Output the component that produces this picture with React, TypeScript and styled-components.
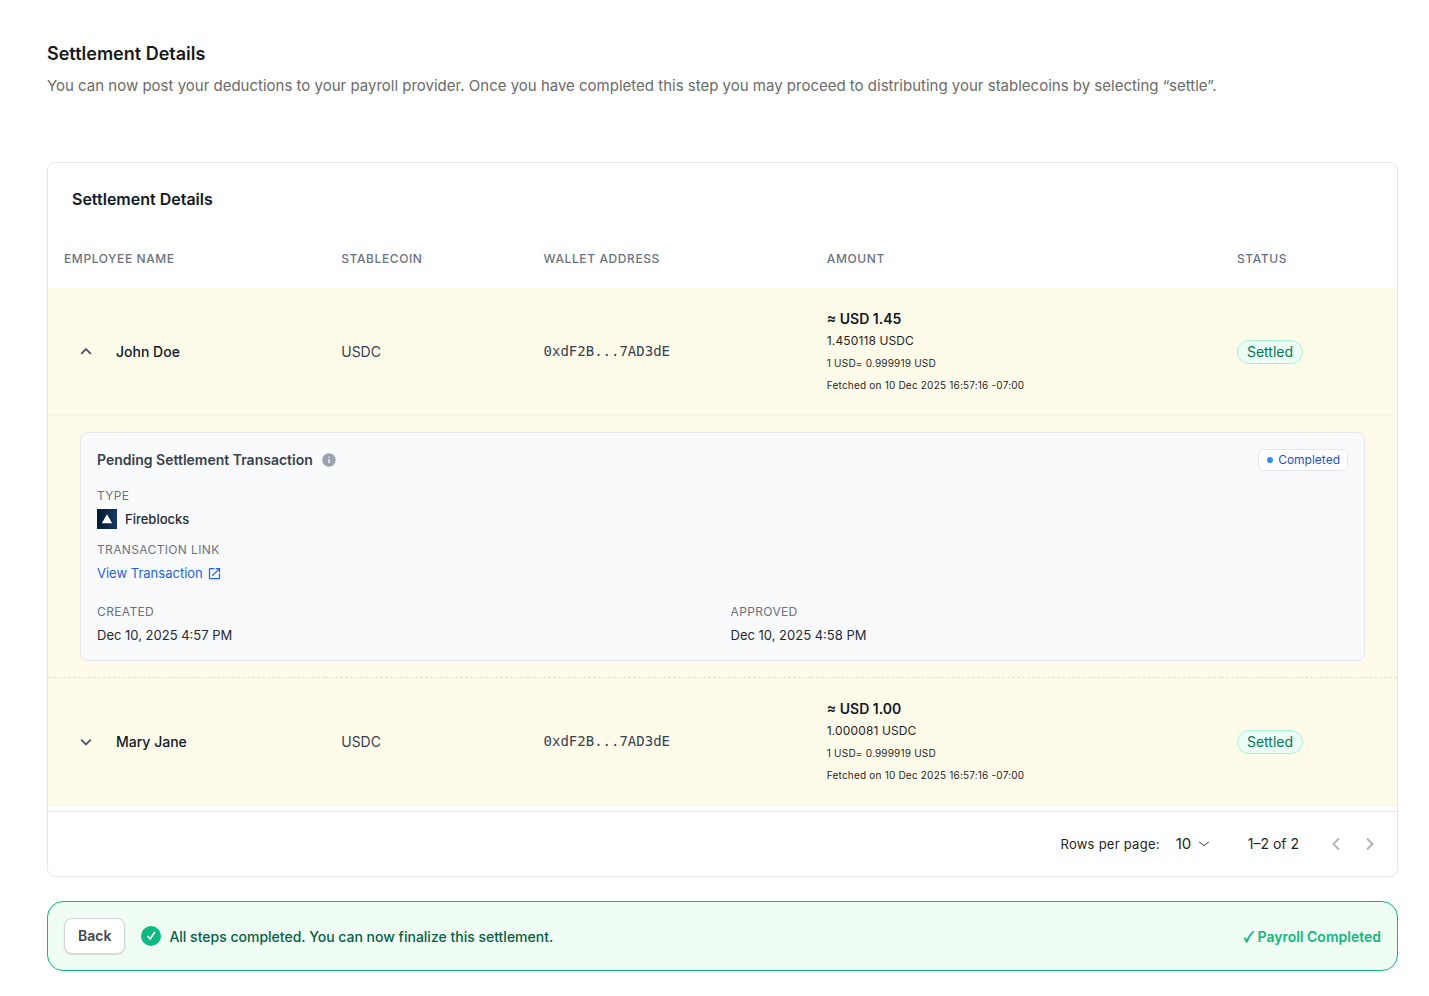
import React, { useState } from "react";
import styled, { createGlobalStyle } from "styled-components";

const GlobalStyle = createGlobalStyle`
  *, *::before, *::after { box-sizing: border-box; }
  body {
    margin: 0;
    background: #ffffff;
    color: #1f1f1f;
    font-family: Inter, "Liberation Sans", sans-serif;
    font-size: 14px;
    line-height: 20px;
  }
  h1, h2, h3, p, dl, dd, dt { margin: 0; }
  button, select { font-family: inherit; }
`;

const Page = styled.main`
  padding: 40px 31px 25px 47px;
`;

const PageTitle = styled.h1`
  font-size: 18px;
  line-height: 28px;
  font-weight: 600;
  color: #1a1a1a;
`;

const PageIntro = styled.p`
  margin-top: 6px;
  font-size: 15px;
  line-height: 24px;
  color: #6b6b6b;
`;

const Card = styled.section`
  margin-top: 64px;
  border: 1px solid #e5e7eb;
  border-radius: 8px;
  overflow: hidden;
`;

const CardTitle = styled.h2`
  padding: 24px 24px 16px;
  font-size: 16px;
  line-height: 24px;
  font-weight: 600;
  color: #111827;
`;

const Table = styled.table`
  width: 100%;
  table-layout: fixed;
  border-collapse: separate;
  border-spacing: 0;
  text-align: left;
`;

const HeadCell = styled.th<{ $width: string }>`
  width: ${(p) => p.$width};
  height: 61px;
  padding: 2px 16px 0;
  font-size: 12px;
  line-height: 18px;
  font-weight: 500;
  letter-spacing: 0.05em;
  text-transform: uppercase;
  color: #6b7280;
`;

const Row = styled.tr<{ $divided?: boolean }>`
  background: #fffbeb;
  > td {
    padding: 20px 16px 19px;
    border-top: ${(p) => (p.$divided ? "1px dashed #e0e0e0" : "0")};
    border-bottom: 1px solid #f3f4f6;
    color: #374151;
  }
`;

const NameGroup = styled.div`
  display: flex;
  align-items: center;
  gap: 20px;
  padding-left: 12px;
  font-weight: 500;
  color: #111827;
`;

const ExpandButton = styled.button`
  display: flex;
  padding: 4px;
  border: 0;
  background: none;
  color: #4b5563;
  cursor: pointer;
`;

const Wallet = styled.span`
  display: block;
  padding-bottom: 2px;
  font-family: "DejaVu Sans Mono", monospace;
  color: #374151;
`;

const Amount = styled.div`
  display: flex;
  flex-direction: column;
  line-height: 22px;
`;

const AmountUsd = styled.strong`
  font-weight: 600;
  color: #111827;
`;

const AmountCoin = styled.span`
  font-size: 12px;
  letter-spacing: 0.01em;
  color: #1f1f1f;
`;

const AmountNote = styled.span`
  font-size: 10px;
  letter-spacing: 0.02em;
  color: #1f1f1f;
`;

const StatusPill = styled.span`
  display: inline-block;
  padding: 1px 9px;
  border: 1px solid #a7f3d0;
  border-radius: 12px;
  background: #ecfdf5;
  line-height: 20px;
  color: #047857;
`;

const DetailCell = styled.td`
  padding: 16px 32px;
  background: #fffbeb;
`;

const Panel = styled.div`
  padding: 16px 16px 15px;
  border: 1px solid #e5e7eb;
  border-radius: 8px;
  background: #f9fafb;
`;

const PanelHeader = styled.div`
  display: flex;
  align-items: center;
  justify-content: space-between;
  height: 22px;
  margin-bottom: 16px;
`;

const PanelTitle = styled.h3`
  display: flex;
  align-items: center;
  gap: 8px;
  font-size: 14px;
  font-weight: 600;
  color: #374151;
`;

const StateChip = styled.span`
  display: flex;
  align-items: center;
  gap: 5px;
  padding: 0 7px 0 8px;
  border: 1px solid #e5e7eb;
  border-radius: 6px;
  background: #ffffff;
  font-size: 12px;
  line-height: 20px;
  color: #1d4ed8;
  &::before {
    content: "";
    width: 6px;
    height: 6px;
    border-radius: 50%;
    background: #2e90fa;
  }
`;

const Fields = styled.dl`
  display: grid;
  grid-template-columns: 1fr 1fr;
  column-gap: 16px;
`;

const Field = styled.div<{ $wide?: boolean; $gap?: number }>`
  grid-column: ${(p) => (p.$wide ? "1 / -1" : "auto")};
  margin-top: ${(p) => p.$gap ?? 0}px;
`;

const FieldLabel = styled.dt`
  margin-bottom: 4px;
  font-size: 12px;
  line-height: 18px;
  letter-spacing: 0.03em;
  text-transform: uppercase;
  color: #6b7280;
`;

const FieldValue = styled.dd<{ $strong?: boolean }>`
  display: flex;
  align-items: center;
  gap: 8px;
  font-size: 13px;
  font-weight: ${(p) => (p.$strong ? 500 : 400)};
  color: #1f2937;
`;

const TransactionLink = styled.a`
  display: flex;
  align-items: center;
  gap: 4px;
  color: #2563eb;
  text-decoration: none;
`;

const Pagination = styled.footer`
  display: flex;
  align-items: center;
  justify-content: flex-end;
  height: 65px;
  margin-top: 5px;
  padding-right: 17px;
  border-top: 1px solid #e5e7eb;
`;

const RowsLabel = styled.label`
  font-size: 13px;
  letter-spacing: 0.02em;
`;

const SelectWrap = styled.span`
  display: grid;
  align-items: center;
  margin: 0 38px 0 16px;
  color: #6b7280;
  > * { grid-area: 1 / 1; }
  > svg { justify-self: end; pointer-events: none; }
`;

const RowsSelect = styled.select`
  appearance: none;
  width: 34px;
  padding: 0;
  border: 0;
  background: none;
  font-size: 15px;
  line-height: 24px;
  color: #1f1f1f;
`;

const PageButtons = styled.span`
  display: flex;
  gap: 14px;
  margin-left: 27px;
`;

const PageButton = styled.button`
  display: flex;
  padding: 0;
  border: 0;
  background: none;
  color: #b5b5b5;
`;

const Banner = styled.section`
  display: flex;
  align-items: center;
  margin-top: 24px;
  padding: 16px;
  border: 1px solid #10b981;
  border-radius: 16px;
  background: #effdf4;
  font-weight: 500;
`;

const BackButton = styled.button`
  height: 36px;
  padding: 0 13px 2px;
  border: 1px solid #d1d5db;
  border-radius: 8px;
  background: #ffffff;
  box-shadow: 0 1px 2px rgba(0, 0, 0, 0.12);
  font-size: 14px;
  font-weight: 600;
  color: #414651;
`;

const BannerText = styled.p`
  display: flex;
  align-items: center;
  gap: 8px;
  margin-left: 16px;
  color: #065f46;
  > span { padding-top: 2px; }
`;

const BannerResult = styled.strong`
  display: flex;
  align-items: center;
  gap: 2px;
  margin-left: auto;
  padding-top: 2px;
  font-weight: 600;
  color: #10b981;
`;

const Chevron = ({ d, size = 20, stroke = 2 }: { d: string; size?: number; stroke?: number }) => (
  <svg width={size} height={size} viewBox="0 0 20 20" fill="none" stroke="currentColor" strokeWidth={stroke} aria-hidden="true">
    <path d={d} />
  </svg>
);

const InfoIcon = () => (
  <svg width="16" height="16" viewBox="0 0 24 24" fill="#9ca3af" aria-hidden="true">
    <path d="M12 2C6.48 2 2 6.48 2 12s4.48 10 10 10 10-4.48 10-10S17.52 2 12 2zm1 15h-2v-6h2v6zm0-8h-2V7h2v2z" />
  </svg>
);

const LaunchIcon = () => (
  <svg width="15" height="15" viewBox="0 0 24 24" fill="currentColor" aria-hidden="true">
    <path d="M19 19H5V5h7V3H5a2 2 0 0 0-2 2v14a2 2 0 0 0 2 2h14c1.1 0 2-.9 2-2v-7h-2v7zM14 3v2h3.59l-9.83 9.83 1.41 1.41L19 6.41V10h2V3h-7z" />
  </svg>
);

const FireblocksLogo = () => (
  <svg width="20" height="20" viewBox="0 0 20 20" aria-hidden="true">
    <defs>
      <linearGradient id="fireblocks-bg" x1="0" x2="1">
        <stop offset="0" stopColor="#021a2b" />
        <stop offset="1" stopColor="#16376a" />
      </linearGradient>
    </defs>
    <rect width="20" height="20" fill="url(#fireblocks-bg)" />
    <path d="M10 5.2 15.2 14.2H4.8Z" fill="#ffffff" />
  </svg>
);

const DoneIcon = () => (
  <svg width="20" height="20" viewBox="0 0 20 20" aria-hidden="true">
    <circle cx="10" cy="10" r="10" fill="#10b981" />
    <path d="M5.8 10.6 7.2 9.5 9 11.7 13.3 5.6 14.6 6.2 9.3 14.2Z" fill="#ffffff" />
  </svg>
);

const CheckMark = () => (
  <svg width="12" height="12" viewBox="0 0 12 12" fill="currentColor" aria-hidden="true">
    <path d="M0.6 7.6 2.4 6.2C3.1 6.6 3.5 7.4 3.8 8.5 5.3 5.2 7.4 2.3 9.6 0.3H11.6C8.6 3.3 6.2 7 4.5 11.4H2.8C2.3 9.7 1.7 8.4 0.6 7.6Z" />
  </svg>
);

const columns = [
  { label: "Employee name", width: "20.55%" },
  { label: "Stablecoin", width: "15%" },
  { label: "Wallet address", width: "21%" },
  { label: "Amount", width: "30.4%" },
  { label: "Status", width: "13.05%" },
];

const employees = [
  { name: "John Doe", usd: "1.45", coin: "1.450118" },
  { name: "Mary Jane", usd: "1.00", coin: "1.000081" },
];

const TransactionPanel = () => (
  <Panel>
    <PanelHeader>
      <PanelTitle>
        Pending Settlement Transaction
        <InfoIcon />
      </PanelTitle>
      <StateChip>Completed</StateChip>
    </PanelHeader>
    <Fields>
      <Field $wide>
        <FieldLabel>Type</FieldLabel>
        <FieldValue $strong>
          <FireblocksLogo />
          Fireblocks
        </FieldValue>
      </Field>
      <Field $wide $gap={12}>
        <FieldLabel>Transaction link</FieldLabel>
        <FieldValue>
          <TransactionLink href="#transaction">
            View Transaction
            <LaunchIcon />
          </TransactionLink>
        </FieldValue>
      </Field>
      <Field $gap={20}>
        <FieldLabel>Created</FieldLabel>
        <FieldValue>Dec 10, 2025 4:57 PM</FieldValue>
      </Field>
      <Field $gap={20}>
        <FieldLabel>Approved</FieldLabel>
        <FieldValue>Dec 10, 2025 4:58 PM</FieldValue>
      </Field>
    </Fields>
  </Panel>
);

export default function App() {
  const [open, setOpen] = useState<string | null>("John Doe");

  return (
    <>
      <GlobalStyle />
      <Page>
        <PageTitle>Settlement Details</PageTitle>
        <PageIntro>
          You can now post your deductions to your payroll provider. Once you have completed this step you may proceed to
          distributing your stablecoins by selecting “settle”.
        </PageIntro>

        <Card>
          <CardTitle>Settlement Details</CardTitle>
          <Table>
            <thead>
              <tr>
                {columns.map((c) => (
                  <HeadCell key={c.label} $width={c.width} scope="col">
                    {c.label}
                  </HeadCell>
                ))}
              </tr>
            </thead>
            <tbody>
              {employees.map((e, i) => {
                const expanded = open === e.name;
                return (
                  <React.Fragment key={e.name}>
                    <Row $divided={i > 0}>
                      <td>
                        <NameGroup>
                          <ExpandButton
                            aria-label={`Transaction of ${e.name}`}
                            aria-expanded={expanded}
                            onClick={() => setOpen(expanded ? null : e.name)}
                          >
                            <Chevron size={12} stroke={3} d={expanded ? "M2 13 10 5 18 13" : "M2 6 10 14 18 6"} />
                          </ExpandButton>
                          {e.name}
                        </NameGroup>
                      </td>
                      <td>USDC</td>
                      <td>
                        <Wallet>0xdF2B...7AD3dE</Wallet>
                      </td>
                      <td>
                        <Amount>
                          <AmountUsd>≈ USD {e.usd}</AmountUsd>
                          <AmountCoin>{e.coin} USDC</AmountCoin>
                          <AmountNote>1 USD= 0.999919 USD</AmountNote>
                          <AmountNote>Fetched on 10 Dec 2025 16:57:16 -07:00</AmountNote>
                        </Amount>
                      </td>
                      <td>
                        <StatusPill>Settled</StatusPill>
                      </td>
                    </Row>
                    {expanded && (
                      <tr>
                        <DetailCell colSpan={columns.length}>
                          <TransactionPanel />
                        </DetailCell>
                      </tr>
                    )}
                  </React.Fragment>
                );
              })}
            </tbody>
          </Table>
          <Pagination>
            <RowsLabel htmlFor="rows-per-page">Rows per page:</RowsLabel>
            <SelectWrap>
              <RowsSelect id="rows-per-page" defaultValue="10">
                <option>10</option>
                <option>25</option>
                <option>50</option>
              </RowsSelect>
              <Chevron size={12} stroke={2} d="M2 6.5 10 13 18 6.5" />
            </SelectWrap>
            <span>1–2 of 2</span>
            <PageButtons>
              <PageButton aria-label="Previous page" disabled>
                <Chevron d="M13 4.5 7.5 10 13 15.5" />
              </PageButton>
              <PageButton aria-label="Next page" disabled>
                <Chevron d="M7 4.5 12.5 10 7 15.5" />
              </PageButton>
            </PageButtons>
          </Pagination>
        </Card>

        <Banner>
          <BackButton>Back</BackButton>
          <BannerText>
            <DoneIcon />
            <span>All steps completed. You can now finalize this settlement.</span>
          </BannerText>
          <BannerResult>
            <CheckMark />
            Payroll Completed
          </BannerResult>
        </Banner>
      </Page>
    </>
  );
}
